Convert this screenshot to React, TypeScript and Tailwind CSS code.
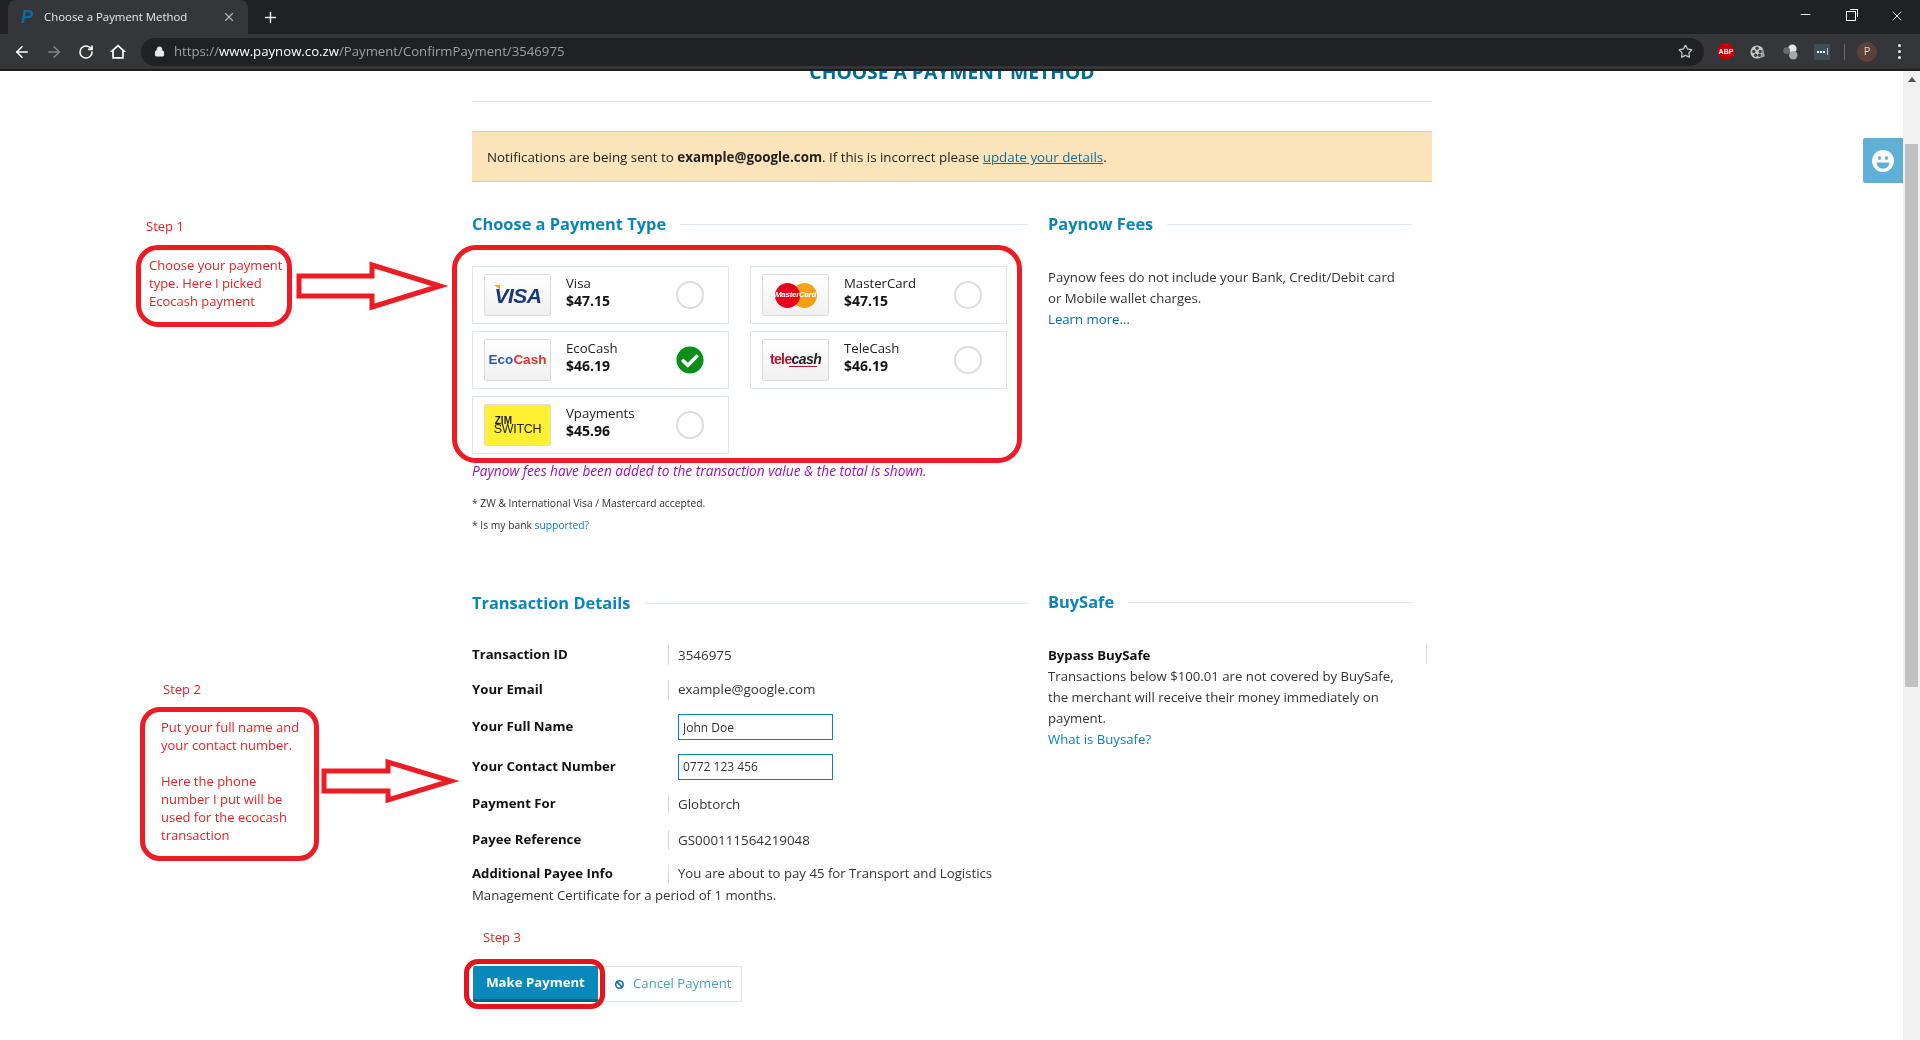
import { ArrowLeft, ArrowRight, Ban, Lock, Minus, Plus, RotateCw, Star, X } from "lucide-react";
import { FaCheckCircle } from "react-icons/fa";

const payments = [
  { name: "Visa", amount: "$47.15", logo: "visa" },
  { name: "MasterCard", amount: "$47.15", logo: "mastercard" },
  { name: "EcoCash", amount: "$46.19", logo: "ecocash", selected: true },
  { name: "TeleCash", amount: "$46.19", logo: "telecash" },
  { name: "Vpayments", amount: "$45.96", logo: "zimswitch" },
];

function Logo({ logo }: { logo: string }) {
  if (logo === "visa") {
    return (
      <span className="relative ml-[1px] font-['Liberation_Sans',sans-serif] text-[21px] font-bold italic leading-none tracking-[-0.5px] text-[#14387f]">
        <span className="absolute -left-[1px] top-0 h-[5px] w-[7px] bg-[#f7a600] [clip-path:polygon(0_0,100%_0,100%_100%)]"></span>
        VISA
      </span>
    );
  }
  if (logo === "mastercard") {
    return (
      <span className="relative flex h-[25px] w-[42px] items-center justify-center">
        <span className="absolute left-0 h-[25px] w-[25px] rounded-full bg-[#e8001c]"></span>
        <span className="absolute right-0 h-[25px] w-[25px] rounded-full bg-[#ffa516] mix-blend-multiply"></span>
        <span className="relative font-['Liberation_Sans',sans-serif] text-[8px] font-bold italic leading-none tracking-[-0.3px] text-white">MasterCard</span>
      </span>
    );
  }
  if (logo === "ecocash") {
    return (
      <span className="font-['Liberation_Sans',sans-serif] text-[13.5px] font-bold leading-none">
        <span className="text-[#2a5caa]">Eco</span>
        <span className="text-[#e4312b]">Cash</span>
      </span>
    );
  }
  if (logo === "telecash") {
    return (
      <span className="flex flex-col items-center">
        <span className="font-['Liberation_Sans',sans-serif] text-[14px] font-bold leading-[13px] tracking-[-0.6px]">
          <span className="text-[#b5152b]">tele</span>
          <span className="italic text-[#222]">cash</span>
        </span>
        <span className="ml-[14px] h-[1px] w-[28px] bg-[#b5152b]"></span>
      </span>
    );
  }
  return (
    <span className="flex flex-col font-['Liberation_Sans',sans-serif] text-[12.5px] leading-[9px] text-[#222]">
      <span className="pl-[1px] text-[10px] font-bold">ZIM</span>
      <span className="tracking-[-0.3px]">SWITCH</span>
    </span>
  );
}

function PaymentCard({ name, amount, logo, selected }: { name: string; amount: string; logo: string; selected?: boolean }) {
  return (
    <div className="flex h-[58px] items-center border border-[#d9e8f0] pl-[11px]">
      <div className={`flex h-[42px] w-[67px] shrink-0 items-center justify-center rounded-[2px] border border-[#dddddd] ${logo === "zimswitch" ? "bg-[#fff033]" : "bg-gradient-to-b from-white to-[#f0f0f0]"}`}>
        <Logo logo={logo} />
      </div>
      <div className="ml-[15px] w-[110px] pb-[7px] leading-[18px]">
        <div className="text-[#222]">{name}</div>
        <div className="text-[14px] font-bold text-[#111]">{amount}</div>
      </div>
      {selected ? (
        <FaCheckCircle className="h-[28px] w-[28px] text-[#0a8f1a]" />
      ) : (
        <div className="h-[28px] w-[28px] rounded-full border-2 border-[#dddddd]"></div>
      )}
    </div>
  );
}

function SectionHeading({ title, className }: { title: string; className: string }) {
  return (
    <div className={`flex items-center gap-[14px] ${className}`}>
      <h2 className="whitespace-nowrap text-[16.4px] font-bold leading-[24px] text-[#0a85b8]">{title}</h2>
      <div className="h-[1px] flex-1 bg-[#dfe8ee]"></div>
    </div>
  );
}

function DetailRow({ label, value, height, input }: { label: string; value: string; height: string; input?: boolean }) {
  return (
    <div className={`flex items-center ${height}`}>
      <div className="w-[196px] font-bold text-[#111]">{label}</div>
      {input ? (
        <input
          readOnly
          value={value}
          className="ml-[10px] h-[26px] w-[155px] border border-[#0a85b8] px-[4px] text-[12px] text-[#333] outline-none"
        />
      ) : (
        <>
          <div className="h-[20px] w-[1px] bg-[#dddddd]"></div>
          <div className="ml-[9px] text-[13.4px] text-[#333]">{value}</div>
        </>
      )}
    </div>
  );
}

function BrowserChrome() {
  return (
    <div className="h-[71px] shrink-0 bg-[#202124] font-['Open_Sans',sans-serif]">
      <div className="flex h-[34px] items-end">
        <div className="ml-[8px] flex h-[34px] w-[240px] items-center rounded-t-[8px] bg-[#35363a] pl-[13px] pr-[12px]">
          <span className="font-['Liberation_Sans',sans-serif] text-[18px] font-bold italic leading-none text-[#0a6f9e]">P</span>
          <span className="ml-[11px] flex-1 text-[11.4px] text-[#e8eaed]">Choose a Payment Method</span>
          <X size={14} className="text-[#b0b3b8]" />
        </div>
        <Plus size={17} className="mb-[8px] ml-[14px] text-[#e8eaed]" />
        <div className="flex-1"></div>
        <Minus size={15} strokeWidth={1.5} className="mb-[12px] text-white" />
        <div className="relative mb-[13px] ml-[33px] h-[10px] w-[10px] border border-white">
          <div className="absolute -right-[3px] -top-[3px] h-[8px] w-[8px] border-r border-t border-white"></div>
        </div>
        <X size={16} strokeWidth={1.3} className="mb-[10px] ml-[33px] mr-[15px] text-white" />
      </div>
      <div className="flex h-[36px] items-center border-b border-[#1a1b1d] bg-[#35363a]">
        <ArrowLeft size={18} className="ml-[13px] text-white" />
        <ArrowRight size={18} className="ml-[14px] text-[#80868b]" />
        <RotateCw size={16} strokeWidth={2.4} className="ml-[15px] text-white" />
        <svg width="20" height="20" viewBox="0 0 24 24" fill="white" fillRule="evenodd" className="ml-[14px]">
          <path d="M12 3L2 12h3v8h14v-8h3zM12 5.7l5 4.5V18H7v-7.8z" />
        </svg>
        <div className="ml-[13px] flex h-[28px] w-[1563px] items-center rounded-full bg-[#202124] pl-[13px] pr-[11px]">
          <Lock size={11} fill="#e8eaed" className="text-[#e8eaed]" />
          <div className="ml-[9px] flex-1 pt-[1px] text-[13.2px] text-[#9aa0a6]">
            https://<span className="text-white">www.paynow.co.zw</span>/Payment/ConfirmPayment/3546975
          </div>
          <Star size={15} className="text-[#c4c7c9]" />
        </div>
        <div className="relative ml-[14px] flex h-[16px] w-[16px] items-center justify-center bg-[#c80000] [clip-path:polygon(30%_0,70%_0,100%_30%,100%_70%,70%_100%,30%_100%,0_70%,0_30%)]">
          <span className="font-['Liberation_Sans',sans-serif] text-[7px] font-bold leading-none text-white">ABP</span>
        </div>
        <svg width="16" height="16" viewBox="0 0 17 17" className="ml-[16px]">
          <circle cx="7.5" cy="8.5" r="7" fill="#c9c9c9" />
          <circle cx="7.5" cy="4.5" r="1.8" fill="#444" />
          <circle cx="4" cy="8" r="1.8" fill="#444" />
          <circle cx="11" cy="8" r="1.8" fill="#444" />
          <circle cx="6" cy="12" r="1.8" fill="#444" />
          <circle cx="10" cy="12" r="1.8" fill="#444" />
          <path d="M13 3 L16 13 L12 15 Z" fill="#999" />
        </svg>
        <svg width="16" height="16" viewBox="0 0 17 17" className="ml-[16px]">
          <circle cx="11" cy="5" r="4.5" fill="#e6e6e6" />
          <circle cx="12" cy="12" r="4.5" fill="#a8a8a8" />
          <circle cx="5" cy="7" r="3.6" fill="#6b6b6b" />
        </svg>
        <div className="ml-[16px] flex h-[16px] w-[16px] items-center justify-center gap-[1px] rounded-[1px] bg-[#3e4f5c]">
          <span className="h-[2px] w-[2px] bg-white"></span>
          <span className="h-[2px] w-[2px] bg-white"></span>
          <span className="h-[2px] w-[2px] bg-white"></span>
          <span className="ml-[1px] h-[7px] w-[1px] bg-[#b9c4cc]"></span>
        </div>
        <div className="ml-[14px] h-[16px] w-[1px] bg-[#6a6c70]"></div>
        <div className="ml-[12px] flex h-[20px] w-[20px] items-center justify-center rounded-full bg-[#5d4037] text-[11px] text-[#e0d5d0]">P</div>
        <div className="ml-[21px] flex flex-col gap-[3px]">
          <span className="h-[3px] w-[3px] rounded-full bg-[#e8eaed]"></span>
          <span className="h-[3px] w-[3px] rounded-full bg-[#e8eaed]"></span>
          <span className="h-[3px] w-[3px] rounded-full bg-[#e8eaed]"></span>
        </div>
      </div>
    </div>
  );
}

function Annotations() {
  return (
    <div className="font-['Open_Sans',sans-serif] text-[13px] leading-[18px] text-[#ed1c24]">
      <div className="absolute left-[146px] top-[217px]">Step 1</div>
      <div className="absolute left-[136px] top-[245px] h-[82px] w-[156px] rounded-[22px] border-[5px] border-[#ed1c24] pl-[8px] pt-[6px]">
        Choose your payment
        <br />
        type. Here I picked
        <br />
        Ecocash payment
      </div>
      <svg className="absolute left-[294px] top-[260px]" width="156" height="52" viewBox="0 0 156 52" fill="none">
        <path d="M5 16 H78 V5 L146 26 L78 47 V36 H5 Z" stroke="#ed1c24" strokeWidth="5" />
      </svg>
      <div className="absolute left-[452px] top-[245px] h-[218px] w-[570px] rounded-[24px] border-[5px] border-[#ed1c24]"></div>

      <div className="absolute left-[163px] top-[680px]">Step 2</div>
      <div className="absolute left-[140px] top-[707px] h-[154px] w-[179px] rounded-[20px] border-[5px] border-[#ed1c24] pl-[16px] pt-[6px]">
        Put your full name and
        <br />
        your contact number.
        <br />
        <br />
        Here the phone
        <br />
        number I put will be
        <br />
        used for the ecocash
        <br />
        transaction
      </div>
      <svg className="absolute left-[320px] top-[757px]" width="140" height="48" viewBox="0 0 140 48" fill="none">
        <path d="M4 14 H68 V5 L131 24 L68 43 V34 H4 Z" stroke="#ed1c24" strokeWidth="5" />
      </svg>

      <div className="absolute left-[483px] top-[928px]">Step 3</div>
      <div className="absolute left-[464px] top-[959px] h-[50px] w-[141px] rounded-[14px] border-[5px] border-[#e4141f]"></div>
    </div>
  );
}

export default function App() {
  return (
    <div className="relative flex h-[1040px] w-[1920px] flex-col overflow-hidden bg-white font-['Open_Sans',sans-serif] text-[13.2px]">
      <BrowserChrome />

      <div className="flex h-[969px]">
        <main className="w-[1903px] overflow-hidden pl-[472px]">
          <div className="w-[960px]">
            <h1 className="-mt-[11px] h-[41px] text-center text-[19.3px] font-bold uppercase leading-[24px] text-[#006d94]">
              Choose a Payment Method
            </h1>
            <div className="h-[1px] bg-[#dfe8ee]"></div>

            <div className="mt-[29px] flex h-[51px] items-center border-y border-[#f9c877] bg-[#fce4ba] pl-[15px] pt-[2px] text-[13.35px] text-[#222]">
              <span>
                Notifications are being sent to <b>example@google.com</b>. If this is incorrect please{" "}
                <a className="text-[#0a6f9e] underline">update your details</a>.
              </span>
            </div>

            <div className="mt-[30px] flex gap-[20px]">
              <section className="w-[556px]">
                <SectionHeading title="Choose a Payment Type" className="" />
                <div className="mt-[30px] grid w-[535px] grid-cols-2 gap-x-[21px] gap-y-[7px]">
                  {payments.map((p) => (
                    <PaymentCard key={p.name} {...p} />
                  ))}
                </div>
                <p className="mt-[8px] text-[13.7px] italic leading-[18px] text-[#9a12b3]">
                  Paynow fees have been added to the transaction value &amp; the total is shown.
                </p>
                <p className="mt-[16px] text-[10.3px] leading-[14px] text-[#333]">* ZW &amp; International Visa / Mastercard accepted.</p>
                <p className="mt-[8px] text-[10.3px] leading-[14px] text-[#333]">
                  * Is my bank <a className="text-[#0a85b8]">supported?</a>
                </p>

                <SectionHeading title="Transaction Details" className="mt-[59px]" />
                <div className="mt-[23px]">
                  <DetailRow label="Transaction ID" value="3546975" height="h-[34px]" />
                  <DetailRow label="Your Email" value="example@google.com" height="h-[35px]" />
                  <DetailRow label="Your Full Name" value="John Doe" height="h-[40px]" input />
                  <DetailRow label="Your Contact Number" value="0772 123 456" height="h-[39px]" input />
                  <DetailRow label="Payment For" value="Globtorch" height="h-[36px]" />
                  <DetailRow label="Payee Reference" value="GS000111564219048" height="h-[36px]" />
                  <div className="mt-[4px] leading-[22px] text-[#333]">
                    <span className="inline-block w-[196px] font-bold text-[#111]">Additional Payee Info</span>
                    <span className="mr-[9px] inline-block h-[18px] w-[1px] bg-[#dddddd] align-middle"></span>
                    You are about to pay 45 for Transport and Logistics Management Certificate for a period of 1 months.
                  </div>
                </div>
                <div className="mt-[60px] flex">
                  <button className="ml-[1px] h-[36px] w-[125px] rounded-[2px] border-b-[3px] border-[#006487] bg-[#0888bb] font-bold text-white">
                    Make Payment
                  </button>
                  <button className="flex h-[36px] w-[144px] items-center border-y border-r border-[#d9e8f0] pl-[17px] text-[#4d9fc7]">
                    <Ban size={9} strokeWidth={4} className="text-[#0a6f9e]" />
                    <span className="ml-[9px]">Cancel Payment</span>
                  </button>
                </div>
              </section>

              <section className="w-[364px] text-[#333]">
                <SectionHeading title="Paynow Fees" className="" />
                <div className="mt-[31px] leading-[21px]">
                  Paynow fees do not include your Bank, Credit/Debit card
                  <br />
                  or Mobile wallet charges.
                  <br />
                  <a className="text-[#0a6f9e]">Learn more...</a>
                </div>
                <SectionHeading title="BuySafe" className="mt-[260px]" />
                <div className="relative mt-[31px] leading-[21px]">
                  <span className="absolute -right-[15px] -top-[1px] h-[20px] w-[1px] bg-[#dddddd]"></span>
                  <div className="font-bold text-[#111]">Bypass BuySafe</div>
                  Transactions below $100.01 are not covered by BuySafe,
                  <br />
                  the merchant will receive their money immediately on
                  <br />
                  payment.
                  <br />
                  <a className="text-[#0a85b8]">What is Buysafe?</a>
                </div>
              </section>
            </div>
          </div>
        </main>

        <div className="relative w-[17px] bg-[#f1f1f1]">
          <div className="mx-auto mt-[6px] h-0 w-0 border-x-[4px] border-b-[5px] border-x-transparent border-b-[#505050]"></div>
          <div className="mx-[2px] mt-[62px] h-[543px] bg-[#c1c1c1]"></div>
        </div>
      </div>

      <div className="absolute left-[1863px] top-[138px] flex h-[45px] w-[40px] items-center justify-center rounded-l-[2px] bg-[#5eb0d6]">
        <svg width="22" height="22" viewBox="0 0 22 22">
          <circle cx="11" cy="11" r="11" fill="white" />
          <ellipse cx="7.5" cy="8" rx="1.5" ry="2" fill="#5eb0d6" />
          <ellipse cx="14.5" cy="8" rx="1.5" ry="2" fill="#5eb0d6" />
          <path d="M4.5 12.5 H17.5 C17 16.5 14.5 18.5 11 18.5 C7.5 18.5 5 16.5 4.5 12.5 Z" fill="#5eb0d6" />
        </svg>
      </div>

      <Annotations />
    </div>
  );
}
